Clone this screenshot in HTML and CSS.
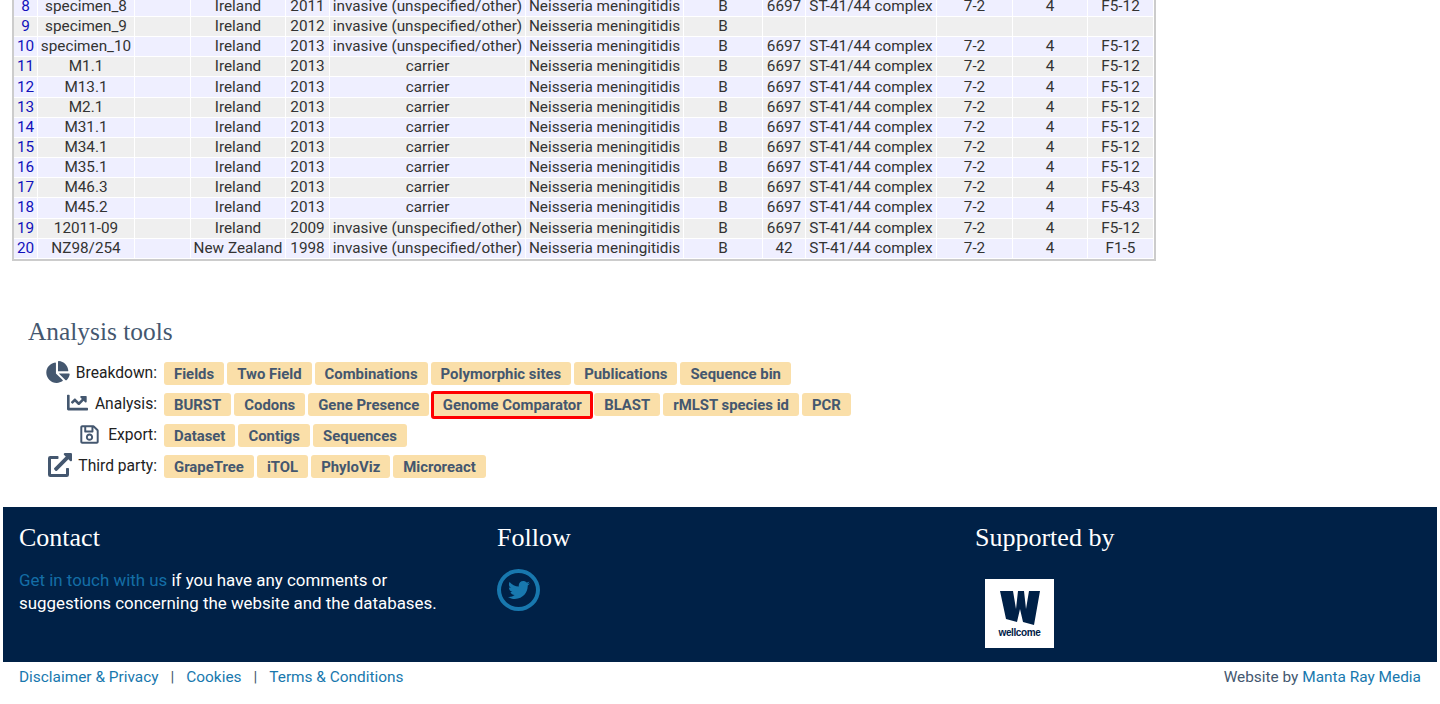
FILE: index.html
```html
<!DOCTYPE html>
<html>
<head>
    <title>Analysis tools</title>
    <link rel="stylesheet" href="styles.css">
</head>
<body>
    <table class="results">
        <colgroup>
            <col class="c-id"><col class="c-isolate"><col class="c-alias"><col class="c-country"><col class="c-year"><col class="c-disease"><col class="c-species"><col class="c-group"><col class="c-st"><col class="c-cc"><col class="c-pora1"><col class="c-pora2"><col class="c-feta">
        </colgroup>
        <tr><td><a href="#">8</a></td><td>specimen_8</td><td></td><td>Ireland</td><td>2011</td><td>invasive (unspecified/other)</td><td>Neisseria meningitidis</td><td>B</td><td>6697</td><td>ST-41/44 complex</td><td>7-2</td><td>4</td><td>F5-12</td></tr>
        <tr><td><a href="#">9</a></td><td>specimen_9</td><td></td><td>Ireland</td><td>2012</td><td>invasive (unspecified/other)</td><td>Neisseria meningitidis</td><td>B</td><td></td><td></td><td></td><td></td><td></td></tr>
        <tr><td><a href="#">10</a></td><td>specimen_10</td><td></td><td>Ireland</td><td>2013</td><td>invasive (unspecified/other)</td><td>Neisseria meningitidis</td><td>B</td><td>6697</td><td>ST-41/44 complex</td><td>7-2</td><td>4</td><td>F5-12</td></tr>
        <tr><td><a href="#">11</a></td><td>M1.1</td><td></td><td>Ireland</td><td>2013</td><td>carrier</td><td>Neisseria meningitidis</td><td>B</td><td>6697</td><td>ST-41/44 complex</td><td>7-2</td><td>4</td><td>F5-12</td></tr>
        <tr><td><a href="#">12</a></td><td>M13.1</td><td></td><td>Ireland</td><td>2013</td><td>carrier</td><td>Neisseria meningitidis</td><td>B</td><td>6697</td><td>ST-41/44 complex</td><td>7-2</td><td>4</td><td>F5-12</td></tr>
        <tr><td><a href="#">13</a></td><td>M2.1</td><td></td><td>Ireland</td><td>2013</td><td>carrier</td><td>Neisseria meningitidis</td><td>B</td><td>6697</td><td>ST-41/44 complex</td><td>7-2</td><td>4</td><td>F5-12</td></tr>
        <tr><td><a href="#">14</a></td><td>M31.1</td><td></td><td>Ireland</td><td>2013</td><td>carrier</td><td>Neisseria meningitidis</td><td>B</td><td>6697</td><td>ST-41/44 complex</td><td>7-2</td><td>4</td><td>F5-12</td></tr>
        <tr><td><a href="#">15</a></td><td>M34.1</td><td></td><td>Ireland</td><td>2013</td><td>carrier</td><td>Neisseria meningitidis</td><td>B</td><td>6697</td><td>ST-41/44 complex</td><td>7-2</td><td>4</td><td>F5-12</td></tr>
        <tr><td><a href="#">16</a></td><td>M35.1</td><td></td><td>Ireland</td><td>2013</td><td>carrier</td><td>Neisseria meningitidis</td><td>B</td><td>6697</td><td>ST-41/44 complex</td><td>7-2</td><td>4</td><td>F5-12</td></tr>
        <tr><td><a href="#">17</a></td><td>M46.3</td><td></td><td>Ireland</td><td>2013</td><td>carrier</td><td>Neisseria meningitidis</td><td>B</td><td>6697</td><td>ST-41/44 complex</td><td>7-2</td><td>4</td><td>F5-43</td></tr>
        <tr><td><a href="#">18</a></td><td>M45.2</td><td></td><td>Ireland</td><td>2013</td><td>carrier</td><td>Neisseria meningitidis</td><td>B</td><td>6697</td><td>ST-41/44 complex</td><td>7-2</td><td>4</td><td>F5-43</td></tr>
        <tr><td><a href="#">19</a></td><td>12011-09</td><td></td><td>Ireland</td><td>2009</td><td>invasive (unspecified/other)</td><td>Neisseria meningitidis</td><td>B</td><td>6697</td><td>ST-41/44 complex</td><td>7-2</td><td>4</td><td>F5-12</td></tr>
        <tr><td><a href="#">20</a></td><td>NZ98/254</td><td></td><td>New Zealand</td><td>1998</td><td>invasive (unspecified/other)</td><td>Neisseria meningitidis</td><td>B</td><td>42</td><td>ST-41/44 complex</td><td>7-2</td><td>4</td><td>F1-5</td></tr>
    </table>

    <section class="tools">
        <h2>Analysis tools</h2>
        <div class="tool-row">
            <div class="tool-label">
                <svg class="icon icon-pie" viewBox="0 0 544 512"><path d="M527.79 288H290.5l158.03 158.03c6.04 6.04 15.98 6.53 22.19.68 38.7-36.46 65.32-85.61 73.13-140.86 1.34-9.46-6.51-17.85-16.06-17.85zm-15.83-64.8C503.72 103.74 408.26 8.28 288.8.04 279.68-.59 272 7.1 272 16.24V240h223.77c9.14 0 16.82-7.68 16.19-16.8zM224 288V50.71c0-9.55-8.39-17.4-17.84-16.06C86.99 51.49-4.1 155.6.14 280.37 4.5 408.51 114.83 513.59 243.03 511.98c50.4-.63 96.97-16.87 135.26-44.03 7.9-5.6 8.42-17.23 1.57-24.08L224 288z"/></svg>
                Breakdown:
            </div>
            <a class="btn" href="#">Fields</a><a class="btn" href="#">Two Field</a><a class="btn" href="#">Combinations</a><a class="btn" href="#">Polymorphic sites</a><a class="btn" href="#">Publications</a><a class="btn" href="#">Sequence bin</a>
        </div>
        <div class="tool-row">
            <div class="tool-label">
                <svg class="icon icon-line" viewBox="0 0 512 512"><path d="M496 384H64V80c0-8.84-7.16-16-16-16H16C7.16 64 0 71.16 0 80v336c0 17.67 14.33 32 32 32h464c8.84 0 16-7.16 16-16v-32c0-8.84-7.16-16-16-16zM464 96H345.94c-21.38 0-32.09 25.85-16.97 40.97l32.4 32.4L288 242.75l-73.37-73.37c-12.5-12.5-32.76-12.5-45.25 0l-68.69 68.69c-6.25 6.25-6.25 16.38 0 22.63l22.62 22.62c6.25 6.25 16.38 6.25 22.63 0L192 237.25l73.37 73.37c12.5 12.5 32.76 12.5 45.25 0l96-96 32.4 32.4c15.12 15.12 40.97 4.41 40.97-16.97V112c.01-8.84-7.15-16-15.99-16z"/></svg>
                Analysis:
            </div>
            <a class="btn" href="#">BURST</a><a class="btn" href="#">Codons</a><a class="btn" href="#">Gene Presence</a><a class="btn btn-marked" href="#">Genome Comparator</a><a class="btn" href="#">BLAST</a><a class="btn" href="#">rMLST species id</a><a class="btn" href="#">PCR</a>
        </div>
        <div class="tool-row">
            <div class="tool-label">
                <svg class="icon icon-save" viewBox="0 0 448 512"><path d="M433.941 129.941l-83.882-83.882A48 48 0 0 0 316.118 32H48C21.49 32 0 53.49 0 80v352c0 26.51 21.49 48 48 48h352c26.51 0 48-21.49 48-48V163.882a48 48 0 0 0-14.059-33.941zM272 80v80H144V80h128zm122 352H54a6 6 0 0 1-6-6V86a6 6 0 0 1 6-6h42v104c0 13.255 10.745 24 24 24h176c13.255 0 24-10.745 24-24V83.882l78.243 78.243a6 6 0 0 1 1.757 4.243V426a6 6 0 0 1-6 6zM224 232c-48.523 0-88 39.477-88 88s39.477 88 88 88 88-39.477 88-88-39.477-88-88-88zm0 128c-22.056 0-40-17.944-40-40s17.944-40 40-40 40 17.944 40 40-17.944 40-40 40z"/></svg>
                Export:
            </div>
            <a class="btn" href="#">Dataset</a><a class="btn" href="#">Contigs</a><a class="btn" href="#">Sequences</a>
        </div>
        <div class="tool-row">
            <div class="tool-label">
                <svg class="icon icon-ext" viewBox="0 0 512 512"><path d="M432 320h-32a16 16 0 0 0-16 16v112H64V128h144a16 16 0 0 0 16-16V80a16 16 0 0 0-16-16H48a48 48 0 0 0-48 48v352a48 48 0 0 0 48 48h352a48 48 0 0 0 48-48V336a16 16 0 0 0-16-16zM488 0H360c-21.37 0-32.05 25.91-17 41l35.73 35.73L135 320.37a24 24 0 0 0 0 34L157.67 377a24 24 0 0 0 34 0l243.61-243.68L471 169c15 15 41 4.5 41-17V24a24 24 0 0 0-24-24z"/></svg>
                Third party:
            </div>
            <a class="btn" href="#">GrapeTree</a><a class="btn" href="#">iTOL</a><a class="btn" href="#">PhyloViz</a><a class="btn" href="#">Microreact</a>
        </div>
    </section>

    <footer class="site-footer">
        <div class="footer-col">
            <h3>Contact</h3>
            <p><a href="#">Get in touch with us</a> if you have any comments or suggestions concerning the website and the databases.</p>
        </div>
        <div class="footer-col">
            <h3>Follow</h3>
            <a class="twitter" href="#">
                <svg viewBox="0 0 512 512"><path d="M459.37 151.716c.325 4.548.325 9.097.325 13.645 0 138.72-105.583 298.558-298.558 298.558-59.452 0-114.68-17.219-161.137-47.106 8.447.974 16.568 1.299 25.34 1.299 49.055 0 94.213-16.568 130.274-44.832-46.132-.975-84.792-31.188-98.112-72.772 6.498.974 12.995 1.624 19.818 1.624 9.421 0 18.843-1.3 27.614-3.573-48.081-9.747-84.143-51.98-84.143-102.985v-1.299c13.969 7.797 30.214 12.67 47.431 13.319-28.264-18.843-46.781-51.005-46.781-87.391 0-19.492 5.197-37.36 14.294-52.954 51.655 63.675 129.3 105.258 216.365 109.807-1.624-7.797-2.599-15.918-2.599-24.04 0-57.828 46.782-104.934 104.934-104.934 30.213 0 57.502 12.67 76.67 33.137 23.715-4.548 46.456-13.32 66.599-25.34-7.798 24.366-24.366 44.833-46.132 57.827 21.117-2.273 41.584-8.122 60.426-16.243-14.292 20.791-32.161 39.308-52.628 54.253z"/></svg>
            </a>
        </div>
        <div class="footer-col">
            <h3>Supported by</h3>
            <div class="wellcome">
                <svg viewBox="0 0 40 35"><path d="M0 1h13l3 18 2-18h6l2 18 3-18h11l-6 34-11-3-3-13-3 13-11-3z"/></svg>
                <span>wellcome</span>
            </div>
        </div>
    </footer>

    <div class="sub-footer">
        <div>
            <a href="#">Disclaimer &amp; Privacy</a><span class="sep">|</span><a href="#">Cookies</a><span class="sep">|</span><a href="#">Terms &amp; Conditions</a>
        </div>
        <div class="credit">Website by <a href="#">Manta Ray Media</a></div>
    </div>
</body>
</html>
```

FILE: styles.css
```css
body {
    margin: 0;
    font-family: Roboto, "Liberation Sans", sans-serif;
    font-size: 15.6px;
    color: #333;
    background: #fff;
    overflow: hidden;
}

.results {
    table-layout: fixed;
    border-collapse: separate;
    border-spacing: 0;
    width: 1144px;
    margin: -3.2px 0 0 12px;
    border: 2px solid #ccc;
    border-top: 0;
    font-size: 15.3px;
}
.results td {
    height: 20.17px;
    box-sizing: border-box;
    padding: 0;
    text-align: center;
    white-space: nowrap;
    line-height: 19px;
    border-right: 1px solid #fff;
    border-bottom: 1px solid #fff;
}
.results tr:nth-child(odd) td { background: #efefff; }
.results tr:nth-child(even) td { background: #efefef; }
.results a { color: #1111bb; text-decoration: none; }

.c-id { width: 24px; }
.c-isolate { width: 97px; }
.c-alias { width: 56px; }
.c-country { width: 95px; }
.c-year { width: 44px; }
.c-disease { width: 196px; }
.c-species { width: 158px; }
.c-group { width: 79px; }
.c-st { width: 43px; }
.c-cc { width: 131px; }
.c-pora1 { width: 76px; }
.c-pora2 { width: 75px; }
.c-feta { width: 66px; }

.tools {
    padding-left: 28px;
    height: 246px;
}
.tools h2 {
    margin: 0;
    padding-top: 54px;
    height: 43px;
    font-family: "Liberation Serif", serif;
    font-weight: normal;
    font-size: 25.4px;
    line-height: 32px;
    color: #44576f;
}
.tool-row {
    display: flex;
    align-items: center;
    gap: 3px;
    height: 31px;
}
.tool-label {
    display: flex;
    align-items: center;
    justify-content: flex-end;
    width: 129px;
    margin-right: 4px;
    color: #222;
}
.icon {
    fill: #44576f;
    margin-right: 6px;
}
.icon-pie { width: 24px; height: 22px; margin-bottom: 2px; }
.icon-line { width: 21px; height: 21px; margin: 0 7px 3px 0; }
.icon-save { width: 19px; height: 21px; margin: 0 9px 1px 0; }
.icon-ext { width: 24px; height: 24px; margin-bottom: 3px; }

.btn {
    display: block;
    padding: 0 10px;
    height: 23px;
    line-height: 24px;
    border-radius: 3px;
    background: #fadfa9;
    color: #44576f;
    font-size: 14.9px;
    font-weight: 700;
    text-decoration: none;
    white-space: nowrap;
}
.btn-marked {
    box-sizing: border-box;
    height: 28px;
    margin: 1px -2px 0 -1px;
    padding: 0 8.5px;
    border: 3px solid #f00;
    line-height: 22px;
}

.site-footer {
    display: flex;
    margin: 0 3px;
    padding: 0 16px;
    height: 155px;
    box-sizing: border-box;
    background: #002147;
    color: #fff;
}
.footer-col {
    flex: none;
    width: 478px;
}
.footer-col h3 {
    margin: 15px 0 0;
    font-family: "Liberation Serif", serif;
    font-weight: normal;
    font-size: 26px;
    line-height: 32px;
}
.footer-col p {
    margin: 15px 0 0;
    width: 440px;
    font-size: 16.9px;
    line-height: 23px;
}
.footer-col p a { color: #146ea6; text-decoration: none; }

.twitter {
    display: flex;
    align-items: center;
    justify-content: center;
    width: 43px;
    height: 42px;
    box-sizing: border-box;
    margin-top: 15px;
    border: 4px solid #1878ae;
    border-radius: 50%;
}
.twitter svg { width: 22px; height: 22px; fill: #1878ae; }

.wellcome {
    width: 69px;
    height: 69px;
    margin: 25px 0 0 10px;
    background: #fff;
    color: #002147;
    text-align: center;
}
.wellcome svg {
    display: block;
    width: 40px;
    height: 35px;
    margin: 0 auto;
    padding-top: 11px;
    fill: #002147;
}
.wellcome span {
    display: block;
    margin-top: 2px;
    font-family: "Liberation Sans", sans-serif;
    font-size: 10px;
    font-weight: 700;
    line-height: 12px;
    letter-spacing: -0.4px;
}

.sub-footer {
    display: flex;
    justify-content: space-between;
    padding: 5px 19px 0;
    font-size: 15.4px;
    line-height: 20px;
    color: #44576f;
}
.sub-footer a { color: #1878ae; text-decoration: none; }
.sep { margin: 0 12px; }
```
